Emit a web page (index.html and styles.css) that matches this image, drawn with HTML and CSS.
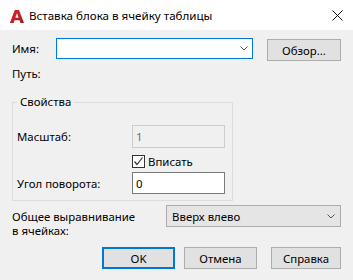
FILE: index.html
```html
<!DOCTYPE html>
<html>
<head>
  <title>Вставка блока в ячейку таблицы</title>
  <link rel="stylesheet" href="styles.css">
</head>
<body>
  <div class="window">
    <!-- Title bar -->
    <div class="titlebar">
      <svg class="app-icon" width="14" height="13" viewBox="0 0 14 13">
        <defs>
          <linearGradient id="red" x1="0" y1="0" x2="1" y2="1">
            <stop offset="0" stop-color="#e0343c"/>
            <stop offset="1" stop-color="#a4131c"/>
          </linearGradient>
        </defs>
        <polygon points="5,0 9,0 14,13 10.5,13 9.6,10.3 4.4,10.3 3.5,13 0,13" fill="url(#red)"/>
        <polygon points="7,3.2 8.7,7.8 5.3,7.8" fill="#f5f5f5"/>
        <polygon points="5,0 7,0 3.5,13 0,13" fill="#c81f29"/>
      </svg>
      <span class="title">Вставка блока в ячейку таблицы</span>
      <svg class="close" width="11" height="11" viewBox="0 0 11 11">
        <path d="M0.5 0.5 L10.5 10.5 M10.5 0.5 L0.5 10.5" stroke="#111" stroke-width="1"/>
      </svg>
    </div>

    <div class="content">
      <div class="name-row">
        <span class="label name-label">Имя:</span>
        <div class="combo">
          <input type="text" class="combo-input">
          <svg class="chevron" width="8" height="5" viewBox="0 0 8 5"><path d="M0.5 0.5 L4 4 L7.5 0.5" fill="none" stroke="#555"/></svg>
        </div>
        <button class="btn browse">Обзор...</button>
      </div>

      <div class="path-row">Путь:</div>

      <fieldset class="group">
        <legend>Свойства</legend>
        <div class="prop-row">
          <span class="prop-label">Масштаб:</span>
          <input type="text" class="field disabled" value="1" disabled>
        </div>
        <div class="check-row">
          <span class="checkbox">
            <svg width="11" height="11" viewBox="0 0 11 11"><path d="M1.5 5.5 L4 8.5 L9.5 1.5" fill="none" stroke="#333" stroke-width="1.2"/></svg>
          </span>
          <span>Вписать</span>
        </div>
        <div class="prop-row angle-row">
          <span class="prop-label">Угол поворота:</span>
          <input type="text" class="field" value="0">
        </div>
      </fieldset>

      <div class="align-row">
        <div class="align-label">Общее выравнивание<br>в ячейках:</div>
        <div class="dropdown">
          <span>Вверх влево</span>
          <svg class="chevron" width="8" height="5" viewBox="0 0 8 5"><path d="M0.5 0.5 L4 4 L7.5 0.5" fill="none" stroke="#555"/></svg>
        </div>
      </div>

      <div class="buttons">
        <button class="btn ok">OK</button>
        <button class="btn cancel">Отмена</button>
        <button class="btn help">Справка</button>
      </div>
    </div>
  </div>
</body>
</html>
```

FILE: styles.css
```css
body {
  margin: 0;
  font-family: 'Noto Sans', 'DejaVu Sans', sans-serif;
  font-size: 11.4px;
  color: #000;
}

.window {
  width: 353px;
  height: 280px;
  background-color: #f0f0f0;
  overflow: hidden;
}

/* Title bar */
.titlebar {
  height: 30px;
  background-color: #fff;
  display: flex;
  align-items: center;
}

.app-icon {
  margin-left: 10px;
  margin-top: 3px;
}

.title {
  margin-left: 5px;
  font-size: 11.6px;
  margin-top: 1px;
}

.close {
  margin-left: auto;
  margin-right: 10px;
  margin-top: 1px;
}

.content {
  padding: 0 12px;
}

/* Name row */
.name-row {
  display: flex;
  align-items: flex-start;
  padding-top: 8px;
}

.name-label {
  width: 44px;
  line-height: 21px;
}

.combo {
  width: 197px;
  height: 21px;
  box-sizing: border-box;
  border: 1px solid #0078d7;
  background-color: #fff;
  display: flex;
  align-items: center;
}

.combo-input {
  flex: 1;
  min-width: 0;
  border: none;
  outline: none;
  height: 17px;
  padding: 0 3px;
  font: inherit;
}

.chevron {
  margin-right: 4px;
}

.btn {
  font: inherit;
  color: #000;
  background-color: #e1e1e1;
  border: 1px solid #adadad;
  box-sizing: border-box;
  height: 22px;
  padding: 0;
}

.browse {
  margin-left: 14px;
  margin-top: 1px;
  width: 74px;
}

.path-row {
  margin-top: 6px;
  line-height: 14px;
}

/* Properties group */
.group {
  margin: 14px 0 0 0;
  width: 221px;
  box-sizing: border-box;
  border: 1px solid #dcdcdc;
  padding: 16px 0 6px 4px;
}

.group legend {
  padding: 0 3px;
  line-height: 14px;
}

.prop-row {
  display: flex;
  align-items: center;
}

.prop-label {
  width: 115px;
}

.field {
  width: 93px;
  height: 23px;
  box-sizing: border-box;
  border: 1px solid #7a7a7a;
  background-color: #fff;
  font: inherit;
  padding: 0 3px;
  outline: none;
}

.field.disabled {
  background-color: #f0f0f0;
  border-color: #cccccc;
  color: #6d6d6d;
}

.check-row {
  display: flex;
  align-items: center;
  margin-top: 7px;
  margin-left: 115px;
  height: 13px;
}

.checkbox {
  width: 13px;
  height: 13px;
  box-sizing: border-box;
  border: 1px solid #333;
  background-color: #fff;
  display: flex;
  align-items: center;
  justify-content: center;
  margin-right: 3px;
}

.angle-row {
  margin-top: 4px;
}

.angle-row .field {
  height: 22px;
}

/* Alignment row */
.align-row {
  display: flex;
  align-items: flex-start;
  margin-top: 4px;
}

.align-label {
  width: 155px;
  line-height: 14px;
  margin-top: 5px;
}

.dropdown {
  width: 176px;
  height: 22px;
  box-sizing: border-box;
  border: 1px solid #adadad;
  background-color: #e5e5e5;
  display: flex;
  align-items: center;
  padding-left: 5px;
}

.dropdown .chevron {
  margin-left: auto;
  margin-right: 5px;
}

/* Bottom buttons */
.buttons {
  display: flex;
  justify-content: flex-end;
  margin-top: 9px;
}

.ok {
  width: 73px;
  border: 2px solid #0078d7;
}

.cancel {
  width: 73px;
  margin-left: 9px;
}

.help {
  width: 70px;
  margin-left: 14px;
}
```
